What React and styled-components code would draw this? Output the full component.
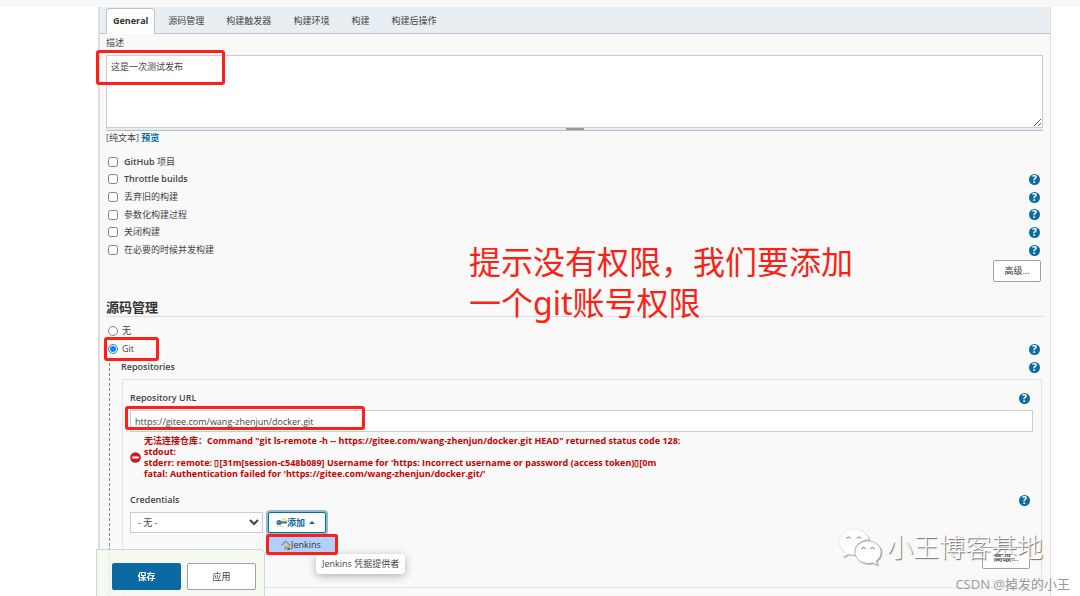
import React from 'react';
import styled, { createGlobalStyle, css } from 'styled-components';

const GlobalStyle = createGlobalStyle`
  *, *::before, *::after { box-sizing: border-box; }
  body {
    margin: 0;
    background: #fff;
    color: #444;
    font: 9px/12px "Open Sans", "Noto Sans CJK SC", sans-serif;
    overflow: hidden;
  }
  button, input, select, textarea { font: inherit; color: inherit; margin: 0; }
`;

const Page = styled.div`
  position: relative;
  display: flex;
  flex-direction: column;
  min-height: 100vh;
`;

const TopStrip = styled.div`
  height: 7px;
  background: #f8f8f8;
`;

const Panel = styled.main`
  flex: 1;
  margin: 0 29px 0 98px;
  background: #f9f9f9;
  border: solid #ddd;
  border-width: 0 1px 0 2px;
`;

const TabBar = styled.nav`
  display: flex;
  height: 27px;
  padding: 1px 6px 0;
  background: #e9eef2;
  border-bottom: 1px solid #bac3cb;
`;

const Tab = styled.button`
  height: 26px;
  padding: 0 11px;
  border: 0;
  background: none;
  cursor: pointer;
  ${(p) =>
    p.$active &&
    css`
      min-width: 49px;
      padding: 0 6px;
      margin-right: 2px;
      background: #fff;
      border: 1px solid #bac3cb;
      border-bottom-color: #fff;
      border-radius: 4px 4px 0 0;
      font-weight: 700;
      color: #333;
    `}
`;

const Form = styled.form`
  padding: 0 7px 0 6px;
`;

const FieldLabel = styled.label`
  display: block;
  height: 12px;
  font-weight: ${(p) => (p.$strong ? 600 : 400)};
`;

const Highlight = styled.span`
  position: absolute;
  z-index: 3;
  inset: ${(p) => p.$inset};
  width: ${(p) => p.$width};
  border: 3px solid #ff1f14;
  border-radius: 3px;
  pointer-events: none;
`;

const Anchor = styled.div`
  position: relative;
`;

const Description = styled.div`
  padding-top: 3px;
`;

const TextArea = styled.textarea`
  display: block;
  width: 100%;
  height: 73px;
  margin-top: 6px;
  padding: 5px 4px;
  border: 1px solid #ccc;
  background: #fff;
  resize: vertical;
  outline: none;
`;

const Grip = styled.div`
  display: flex;
  justify-content: center;
  height: 3px;
  background: #e6ecef;
  border-bottom: 1px solid #b5bfc6;

  &::after {
    content: "";
    width: 18px;
    height: 2px;
    background: #999;
  }
`;

const Preview = styled.div`
  height: 14px;
  line-height: 14px;
`;

const Link = styled.a`
  color: #0b6aa2;
  font-weight: 700;
  text-decoration: none;
`;

const OptionList = styled.div`
  display: grid;
  grid-auto-rows: 1fr;
  height: 106px;
  margin-top: 8px;
`;

const Row = styled.div`
  display: flex;
  align-items: center;
  justify-content: space-between;
  height: ${(p) => (p.$fixed ? '18px' : 'auto')};
  padding-right: 3px;
`;

const Option = styled.label`
  display: flex;
  align-items: center;
  gap: ${(p) => (p.$radio ? 4 : 6)}px;
  padding-left: 2px;

  input { width: 10px; height: 10px; opacity: 0.9; }
`;

const Strong = styled.span`
  font-weight: 600;
`;

const HelpButton = styled.button`
  display: grid;
  place-items: center;
  flex: none;
  width: 11px;
  height: 11px;
  padding: 0;
  border: 0;
  border-radius: 50%;
  background: #0b6aa2;
  color: #fff;
  font-size: 10px;
  font-weight: 700;
  line-height: 11px;
`;

const ActionRow = styled.div`
  display: flex;
  justify-content: flex-end;
  padding: ${(p) => (p.$spaced ? '14px 3px 0 0' : '1px 2px 0 0')};
`;

const Button = styled.button`
  min-width: ${(p) => (p.$large ? 69 : 48)}px;
  height: ${(p) => (p.$large ? 27 : 22)}px;
  padding: 0 8px;
  border: 1px solid ${(p) => (p.$primary ? '#0b6aa2' : '#98a4ae')};
  border-radius: 2px;
  background: ${(p) => (p.$primary ? '#0b6aa2' : '#fff')};
  color: ${(p) => (p.$primary ? '#fff' : '#333')};
  font-weight: ${(p) => (p.$primary ? 700 : 400)};
`;

const SectionTitle = styled.h2`
  height: 20px;
  margin: 15px 0 5px;
  border-bottom: 1px solid #ddd;
  color: #333;
  font-size: 13px;
  line-height: 20px;
  font-weight: 700;
`;

const Nested = styled.div`
  margin-left: 3px;
  padding-left: 11px;
  border-left: 1px dashed #888;
`;

const RepoBox = styled.section`
  height: 209px;
  margin: 3px 1px 0;
  padding: 9px 8px 9px 7px;
  border: 1px solid #e4e4e4;
`;

const TextInput = styled.input`
  display: block;
  width: 100%;
  height: 22px;
  margin-top: 3px;
  padding: 0 4px;
  border: 1px solid #ccc;
  background: #fff;
  outline: none;
`;

const ErrorMessage = styled.div`
  display: flex;
  align-items: center;
  gap: 3px;
  height: 46px;
  margin: 2px 0 11px;
  color: #c00;
  font-weight: 700;
  line-height: 11px;

  p { margin: 0; white-space: pre; }
`;

const Credentials = styled.div`
  display: flex;
  gap: 5px;
  margin-top: 3px;
`;

const Select = styled.select`
  width: 133px;
  height: 21px;
  padding: 0 3px;
  border: 1px solid #ccc;
  background: #fff;
`;

const AddButton = styled.button`
  display: flex;
  align-items: center;
  width: 58px;
  height: 21px;
  padding: 0 7px;
  border: 1px solid #0b6aa2;
  border-radius: 2px;
  background: #fff;
  box-shadow: 0 0 0 2px #8fbbd5;
  color: #0b6aa2;
  font-weight: 700;

  &::after {
    content: "";
    margin-left: 4px;
    border: solid transparent;
    border-width: 0 3px 3px;
    border-bottom-color: #0b6aa2;
  }
`;

const Menu = styled.div`
  position: absolute;
  z-index: 3;
  top: 22px;
  left: -2px;
  width: 72px;
`;

const MenuItem = styled.button`
  display: flex;
  align-items: center;
  width: 100%;
  height: 21px;
  padding: 0 15px;
  border: 0;
  background: #b0d0ff;
  color: #333;
`;

const Tooltip = styled.div`
  position: absolute;
  z-index: 2;
  top: 42px;
  left: 48px;
  padding: 4px 6px;
  border-radius: 4px;
  background: #fff;
  box-shadow: 0 2px 8px rgba(0, 0, 0, 0.3);
  white-space: nowrap;
`;

const NextButton = styled.div`
  width: 82px;
  height: 7px;
  margin: 1px 0 0 3px;
  border: 1px solid #ddd;
  border-bottom: 0;
`;

const StickyBar = styled.div`
  position: fixed;
  z-index: 1;
  left: 96px;
  bottom: 0;
  display: flex;
  gap: 6px;
  height: 47px;
  padding: 13px 8px 0 15px;
  border: 1px solid #c8dacd;
  border-bottom: 0;
  border-radius: 0 5px 0 0;
  background: rgba(245, 249, 241, 0.85);
`;

const Annotation = styled.p`
  position: absolute;
  z-index: 3;
  top: 241px;
  left: 469px;
  margin: 0;
  color: #ff1f14;
  font-family: "Noto Sans", "Noto Sans CJK SC", sans-serif;
  font-size: 32px;
  line-height: 41px;
`;

const Brand = styled.div`
  position: absolute;
  z-index: 4;
  right: 37px;
  bottom: 29px;
  display: flex;
  align-items: center;
  gap: 5px;
  color: #fff;
  font-size: 26px;
  font-weight: 300;
  line-height: 40px;
  text-shadow: 1px 1px 1px #666;
  svg { filter: drop-shadow(1px 1px 0 #aaa); }
`;

const Credit = styled.div`
  position: absolute;
  z-index: 4;
  right: 10px;
  bottom: 3px;
  color: #999;
  font-size: 13px;
  line-height: 18px;
`;

const Help = ({ topic }) => (
  <HelpButton type="button" aria-label={`Help: ${topic}`}>?</HelpButton>
);

const KeyIcon = () => (
  <svg width="11" height="11" viewBox="0 0 11 11" aria-hidden="true">
    <circle cx="8" cy="3.500" r="2.500" fill="#f7e58a" />
    <path d="M5 4.500h6v2H5z" fill="#3f6f9e" />
    <circle cx="3" cy="5.500" r="2.600" fill="#44709c" />
    <circle cx="2.300" cy="5.500" r=".6" fill="#dce8f2" />
    <path d="M1 9.500h7" stroke="#ddd" />
  </svg>
);

const HomeIcon = () => (
  <svg width="10" height="10" viewBox="0 0 10 10" aria-hidden="true">
    <path d="M2 4.500 4.700 2 8.500 5v4.500H2z" fill="#c9c9c9" />
    <path d="M.5 5.500 4.500 1.200l5 4.300" fill="none" stroke="#8b9298" strokeWidth="1.400" />
    <path d="M3.500 6.500h2v3h-2z" fill="#888f96" />
    <circle cx="7.500" cy="6.500" r="1.300" fill="#d4a943" />
    <path d="M6.200 10V7.800h2.800V10z" fill="#4e7b45" />
  </svg>
);

const StopIcon = () => (
  <svg width="11" height="11" viewBox="0 0 11 11" aria-hidden="true">
    <circle cx="5.500" cy="5.500" r="5.300" fill="#d11a20" />
    <rect x="2.200" y="4.500" width="6.600" height="2" rx=".4" fill="#fff" />
  </svg>
);

const ChatIcon = () => (
  <svg width="44" height="38" viewBox="0 0 44 38" aria-hidden="true">
    <path
      d="M16 1C7.500 1 1 6.700 1 14c0 4.300 2.200 7.800 5.700 10.200L5 29l5.600-2.900c2 .6 4 .9 6.400.8-2-8.500 5-15.500 14-15.300C29.500 5.300 23.500 1 16 1z"
      fill="#fff" stroke="#ddd" strokeWidth=".6"
    />
    <path
      d="M43 24c0-6.300-6-11-13-11s-13 4.900-13 11.200S23 35.400 30 35.400c1.700 0 3.200-.2 4.700-.7L39.500 37l-1.300-4.200C41.300 30.700 43 27.600 43 24z"
      fill="#fff" stroke="#aaa" strokeWidth=".7"
    />
    <path
      d="M8.500 10.500q2-3 4 0M19 10.500q2-3 4 0M23.500 21q2-3 4 0M32.500 21q2-3 4 0"
      fill="none" stroke="#888" strokeWidth="1.200"
    />
  </svg>
);

const tabs = ['General', '源码管理', '构建触发器', '构建环境', '构建', '构建后操作'];

const options = [
  { strong: 'GitHub', text: ' 项目', help: false },
  { strong: 'Throttle builds', text: '', help: true },
  { text: '丢弃旧的构建', help: true },
  { text: '参数化构建过程', help: true },
  { text: '关闭构建', help: true },
  { text: '在必要的时候并发构建', help: true },
];

const errorText = `无法连接仓库：Command "git ls-remote -h -- https://gitee.com/wang-zhenjun/docker.git HEAD" returned status code 128:
stdout:
stderr: remote: ▯[31m[session-c548b089] Username for 'https: Incorrect username or password (access token)▯[0m
fatal: Authentication failed for 'https://gitee.com/wang-zhenjun/docker.git/'`;

export default function App() {
  return (
    <Page>
      <GlobalStyle />
      <TopStrip />
      <Panel>
        <TabBar>
          {tabs.map((name, i) => (
            <Tab key={name} type="button" $active={i === 0}>{name}</Tab>
          ))}
        </TabBar>
        <Form onSubmit={(e) => e.preventDefault()}>
          <Description>
            <FieldLabel htmlFor="description">描述</FieldLabel>
            <Anchor>
              <TextArea id="description" defaultValue="这是一次测试发布" />
              <Highlight $inset="-5px auto 43px -10px" $width="129px" />
            </Anchor>
            <Grip />
            <Preview>[纯文本] <Link href="#preview">预览</Link></Preview>
          </Description>

          <OptionList>
            {options.map((o) => (
              <Row key={o.text + o.strong}>
                <Option>
                  <input type="checkbox" />
                  <span>{o.strong && <Strong>{o.strong}</Strong>}{o.text}</span>
                </Option>
                {o.help && <Help topic={o.strong || o.text} />}
              </Row>
            ))}
          </OptionList>
          <ActionRow><Button type="button">高级...</Button></ActionRow>

          <SectionTitle>源码管理</SectionTitle>
          <Row $fixed>
            <Option $radio><input type="radio" name="scm" />无</Option>
          </Row>
          <Anchor>
            <Row $fixed>
              <Option $radio><input type="radio" name="scm" defaultChecked />Git</Option>
              <Help topic="Git" />
            </Row>
            <Highlight $inset="-3px auto -3px -2px" $width="55px" />
          </Anchor>
          <Nested>
            <Row $fixed>
              <Strong>Repositories</Strong>
              <Help topic="Repositories" />
            </Row>
            <RepoBox>
              <Row $fixed>
                <FieldLabel htmlFor="repo" $strong>Repository URL</FieldLabel>
                <Help topic="Repository URL" />
              </Row>
              <Anchor>
                <TextInput id="repo" defaultValue="https://gitee.com/wang-zhenjun/docker.git" />
                <Highlight $inset="-4px auto 2px -5px" $width="240px" />
              </Anchor>
              <ErrorMessage role="alert">
                <StopIcon />
                <p>{errorText}</p>
              </ErrorMessage>
              <Row $fixed>
                <FieldLabel htmlFor="credentials" $strong>Credentials</FieldLabel>
                <Help topic="Credentials" />
              </Row>
              <Credentials>
                <Select id="credentials"><option>- 无 -</option></Select>
                <Anchor>
                  <AddButton type="button"><KeyIcon />添加</AddButton>
                  <Menu>
                    <MenuItem type="button"><HomeIcon />Jenkins</MenuItem>
                    <Highlight $inset="0" $width="auto" />
                  </Menu>
                  <Tooltip role="tooltip">Jenkins 凭据提供者</Tooltip>
                </Anchor>
              </Credentials>
              <ActionRow $spaced><Button type="button">高级...</Button></ActionRow>
            </RepoBox>
            <NextButton />
          </Nested>
        </Form>
      </Panel>
      <StickyBar>
        <Button type="button" $large $primary>保存</Button>
        <Button type="button" $large>应用</Button>
      </StickyBar>
      <Annotation>提示没有权限，我们要添加<br />一个git账号权限</Annotation>
      <Brand><ChatIcon />小王博客基地</Brand>
      <Credit>CSDN @掉发的小王</Credit>
    </Page>
  );
}
